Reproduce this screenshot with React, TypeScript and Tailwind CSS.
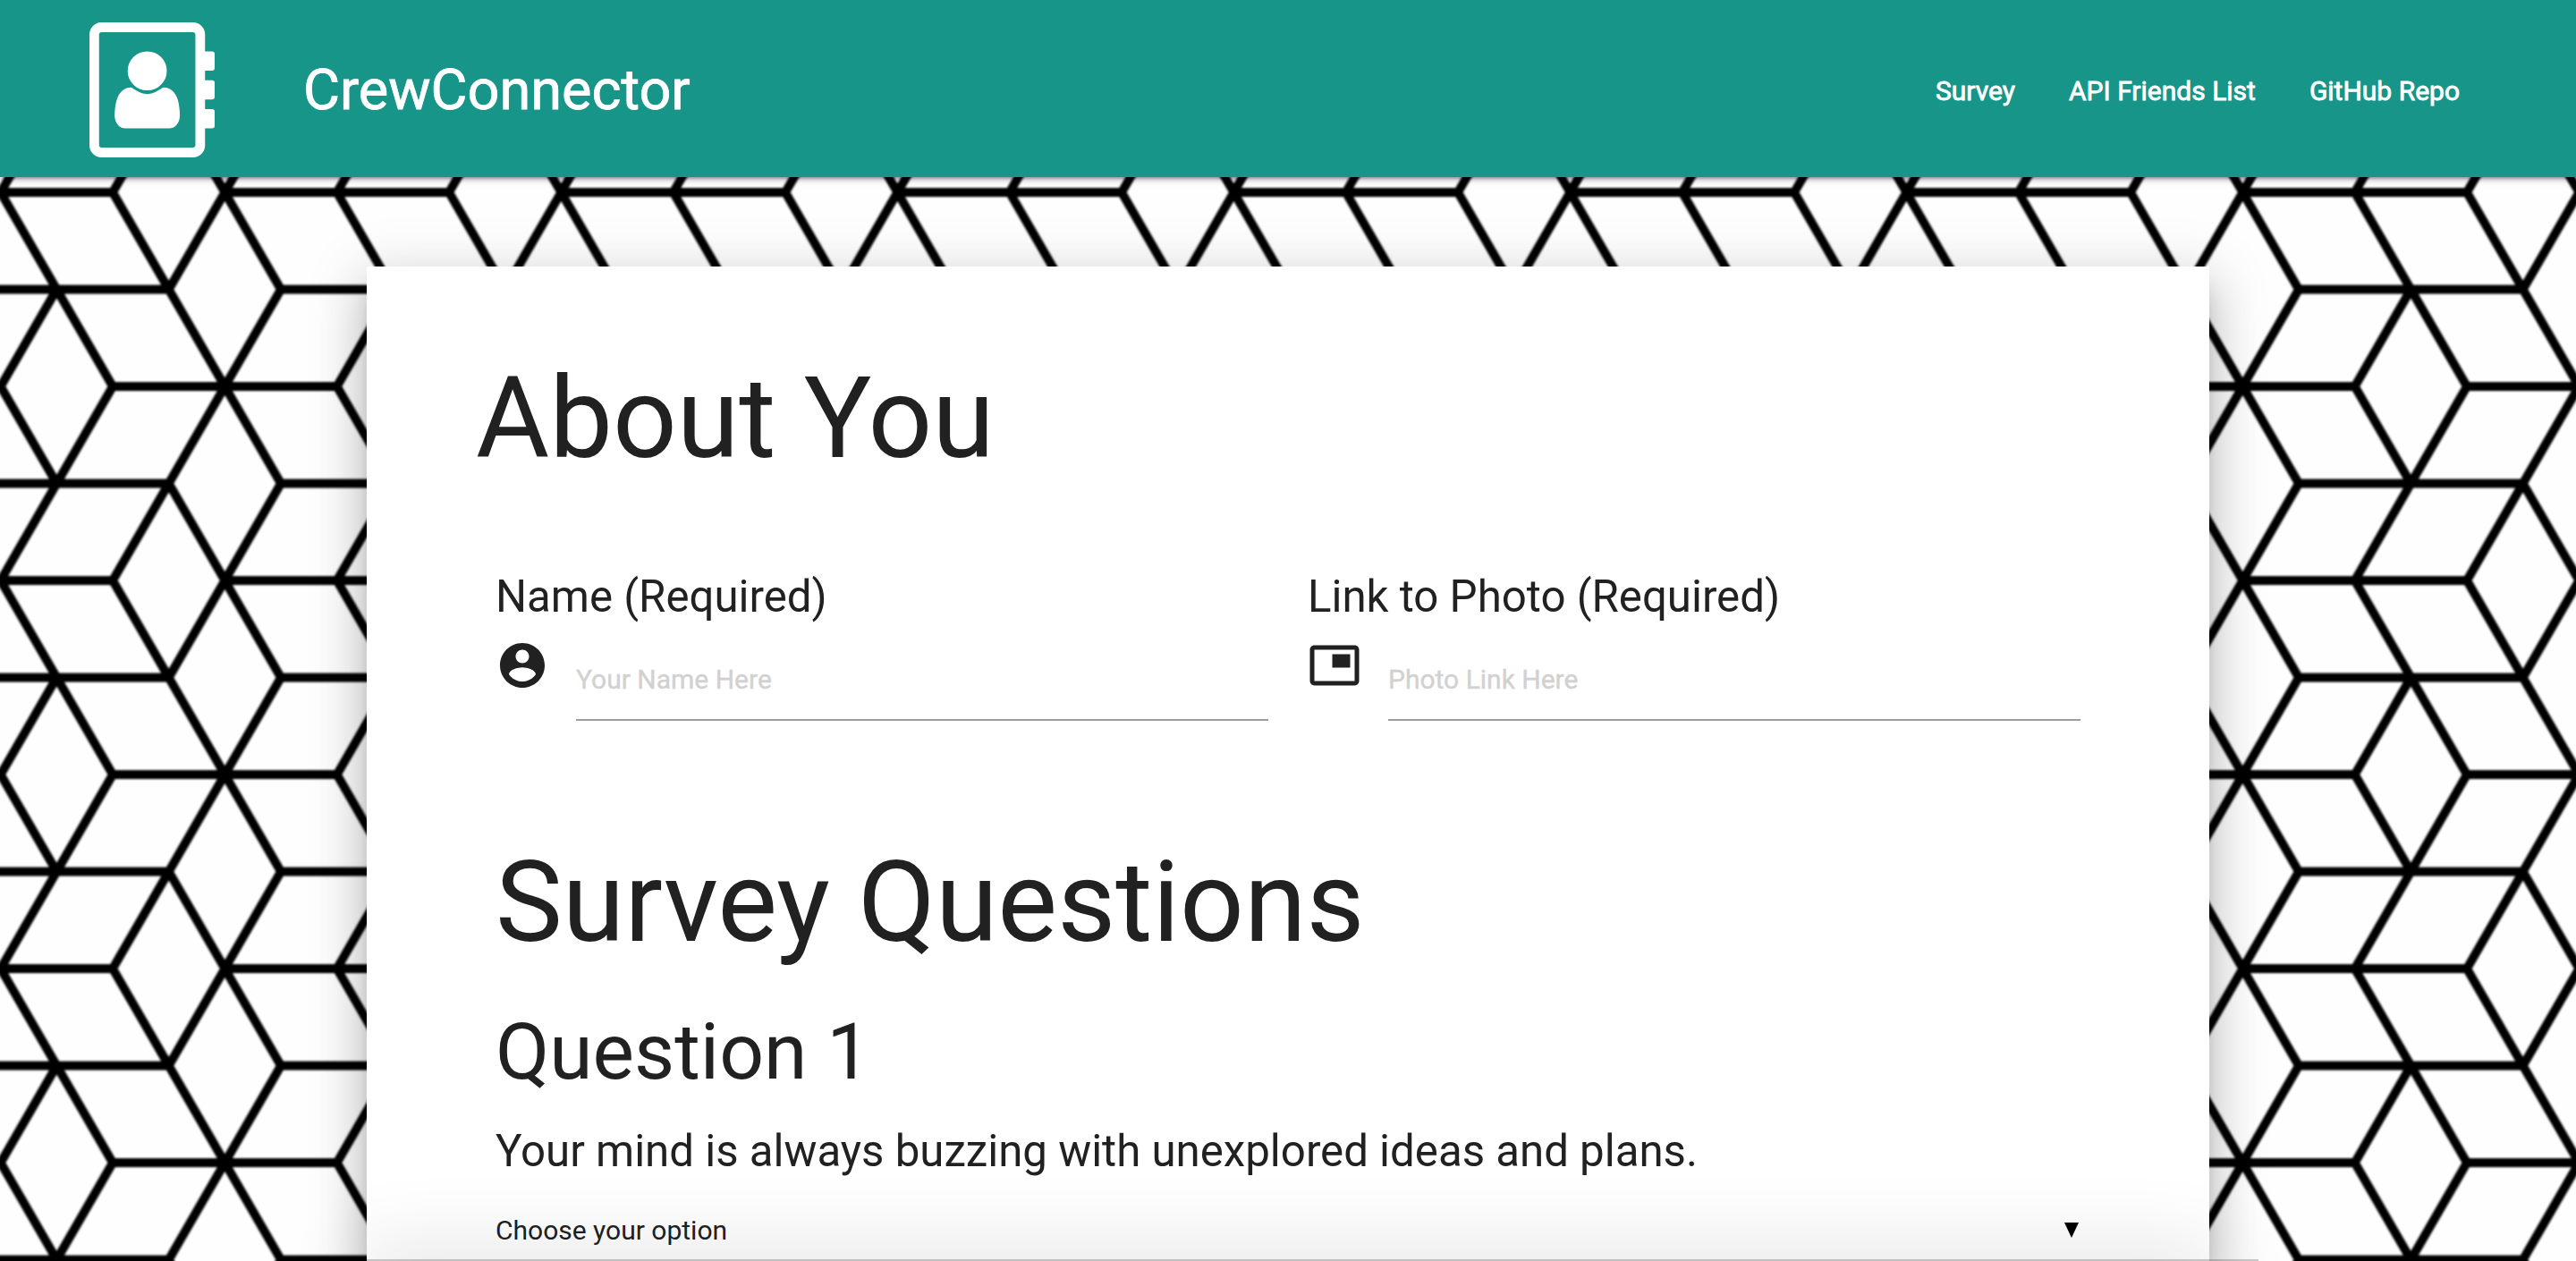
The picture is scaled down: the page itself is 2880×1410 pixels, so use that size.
import React from 'react';

const TILE_LINES =
  // horizontals
  'M-2 0H2M4 0H8M-1 1H3M5 1H9M-4 2H0M2 2H6M-1 3H3M5 3H9M-2 4H2M4 4H8' +
  // row 0 to 1
  'M-2 0L-3 1M0 0L1 1M2 0L3 1M4 0L3 1M4 0L5 1M6 0L7 1M-2 0L-1 1' +
  // row 1 to 2
  'M1 1L0 2M1 1L2 2M3 1L4 2M5 1L4 2M7 1L6 2M-1 1L-2 2' +
  // row 2 to 3
  'M0 2L1 3M2 2L1 3M4 2L3 3M4 2L5 3M6 2L7 3M-2 2L-1 3' +
  // row 3 to 4
  'M1 3L0 4M3 3L2 4M3 3L4 4M5 3L4 4M7 3L6 4M-1 3L-2 4' +
  // neighbours above and below the tile
  'M1 -1L0 0M3 -1L2 0M3 -1L4 0M5 -1L4 0M7 -1L6 0M0 4L1 5M2 4L3 5M4 4L3 5M4 4L5 5M6 4L7 5';

function RhombusBackdrop() {
  return (
    <svg className="absolute inset-0 -z-10 h-full w-full" aria-hidden="true">
      <defs>
        <pattern id="rhombus" width="376" height="434" patternUnits="userSpaceOnUse" patternTransform="translate(0.7 215.1)">
          <g transform="scale(62.6667 108.5)">
            <path d={TILE_LINES} fill="none" stroke="#040404" strokeWidth="9.8" vectorEffect="non-scaling-stroke" />
          </g>
        </pattern>
        <filter id="soften" x="0" y="0" width="100%" height="100%">
          <feGaussianBlur stdDeviation="0.9" />
        </filter>
      </defs>
      <rect width="100%" height="100%" fill="#fefefe" />
      <rect x="-10" y="-10" width="2900" height="1430" fill="url(#rhombus)" filter="url(#soften)" />
    </svg>
  );
}

function AddressBook() {
  return (
    <svg className="h-[151px] w-[140px] shrink-0" viewBox="0 0 1664 1792" fill="currentColor" aria-hidden="true">
      <path d="M1028 644q0 107-76.5 183t-183.5 76-183.5-76-76.5-183q0-108 76.5-184t183.5-76 183.5 76 76.5 184zM980 864q46 0 82.5 17t60 47.5 39.5 67 24 81 11.5 82.5 3.5 79q0 67-39.5 118.5t-105.5 51.5h-576q-66 0-105.5-51.5t-39.5-118.5q0-48 4.5-93.5t18.5-98.5 36.5-91.5 63-64.5 93.5-26h5q7 4 32 19.5t35.5 21 33 17 37 16 35 9 39.5 4.5 39.5-4.5 35-9 37-16 33-17 35.5-21 32-19.5zM1664 608q0 13-9.5 22.5t-22.5 9.5h-96v128h96q13 0 22.5 9.5t9.5 22.5v192q0 13-9.5 22.5t-22.5 9.5h-96v128h96q13 0 22.5 9.5t9.5 22.5v192q0 13-9.5 22.5t-22.5 9.5h-96v224q0 66-47 113t-113 47h-1216q-66 0-113-47t-47-113v-1472q0-66 47-113t113-47h1216q66 0 113 47t47 113v224h96q13 0 22.5 9.5t9.5 22.5v192zM1408 1632v-1472q0-13-9.5-22.5t-22.5-9.5h-1216q-13 0-22.5 9.5t-9.5 22.5v1472q0 13 9.5 22.5t22.5 9.5h1216q13 0 22.5-9.5t9.5-22.5z" />
    </svg>
  );
}

const ACCOUNT =
  'M12 2C6.48 2 2 6.48 2 12s4.48 10 10 10 10-4.48 10-10S17.52 2 12 2zm0 3c1.66 0 3 1.34 3 3s-1.34 3-3 3-3-1.34-3-3 1.34-3 3-3zm0 14.2c-2.5 0-4.71-1.28-6-3.22.03-1.99 4-3.08 6-3.08 1.99 0 5.97 1.09 6 3.08-1.29 1.94-3.5 3.22-6 3.22z';
const PICTURE =
  'M19 7h-8v6h8V7zm2-4H3c-1.1 0-2 .9-2 2v14c0 1.1.9 1.98 2 1.98h18c1.1 0 2-.88 2-1.98V5c0-1.1-.9-2-2-2zm0 16.01H3V4.98h18v14.03z';

function Field({ label, icon, placeholder }: { label: string; icon: string; placeholder: string }) {
  return (
    <label className="block w-[864px]">
      <span className="block text-[49.2px] leading-[54px]">{label}</span>
      <span className="mt-5 flex h-[92px]">
        <svg className="size-[60px] shrink-0" viewBox="0 0 24 24" fill="currentColor" aria-hidden="true">
          <path d={icon} />
        </svg>
        <input
          className="ml-[30px] h-[92px] w-[774px] border-b-2 border-[#9e9e9e] bg-transparent text-[30px] outline-none [-webkit-text-stroke:0.4px_#d1d1d1] placeholder:text-[#d1d1d1]"
          placeholder={placeholder}
        />
      </span>
    </label>
  );
}

export default function App() {
  return (
    <div className="relative isolate flex h-[1410px] w-[2880px] flex-col overflow-hidden font-[Roboto,sans-serif] text-[#212121]">
      <RhombusBackdrop />
      <header className="z-10 flex h-[198px] shrink-0 items-center bg-[#179588] pt-[3px] pr-[130px] pl-[100px] text-white shadow-[0_4px_4px_0_rgba(0,0,0,0.14),0_2px_10px_0_rgba(0,0,0,0.12),0_6px_2px_-4px_rgba(0,0,0,0.2)]">
        <AddressBook />
        <span className="ml-[99px] pt-[2px] text-[63px] [-webkit-text-stroke:0.8px_white]">CrewConnector</span>
        <nav className="ml-auto flex gap-[60px] pt-[2px] text-[30px] [-webkit-text-stroke:0.8px_white]">
          <a>Survey</a>
          <a>API Friends List</a>
          <a>GitHub Repo</a>
        </nav>
      </header>

      <main className="mx-auto mt-[100px] h-[1112px] w-[2060px] shrink-0 bg-white pt-[101px] pl-[144px] shadow-[0_32px_48px_4px_rgba(0,0,0,0.14),0_12px_60px_10px_rgba(0,0,0,0.12),0_16px_20px_-10px_rgba(0,0,0,0.3)]">
        <h1 className="-ml-[22px] text-[126px] leading-[139px]">About You</h1>
        <div className="mt-[102px] flex gap-11">
          <Field label="Name (Required)" icon={ACCOUNT} placeholder="Your Name Here" />
          <Field label="Link to Photo (Required)" icon={PICTURE} placeholder="Photo Link Here" />
        </div>
        <h1 className="mt-[134px] text-[126px] leading-[138.6px]">Survey Questions</h1>
        <h3 className="mt-[49.4px] text-[87.6px] leading-[96.4px]">Question 1</h3>
        <h5 className="mt-[35.6px] text-[49.2px] leading-[54.1px]">Your mind is always buzzing with unexplored ideas and plans.</h5>
        <div className="mt-[36.4px] flex h-[50px] w-[1772px] items-center justify-between pr-[2px] text-[30px]">
          <span>Choose your option</span>
          <svg className="h-[17px] w-[16px]" viewBox="0 0 16 17" aria-hidden="true">
            <path d="M0 0H16L8 17Z" fill="#000" />
          </svg>
        </div>
      </main>

      <footer className="mx-auto h-10 w-[2060px] shrink-0 bg-white shadow-[0_0_90px_10px_rgba(0,0,0,0.13)]" />
      <div className="absolute bottom-0 left-[355px] h-[2px] w-[2170px] bg-black/20" />
    </div>
  );
}
